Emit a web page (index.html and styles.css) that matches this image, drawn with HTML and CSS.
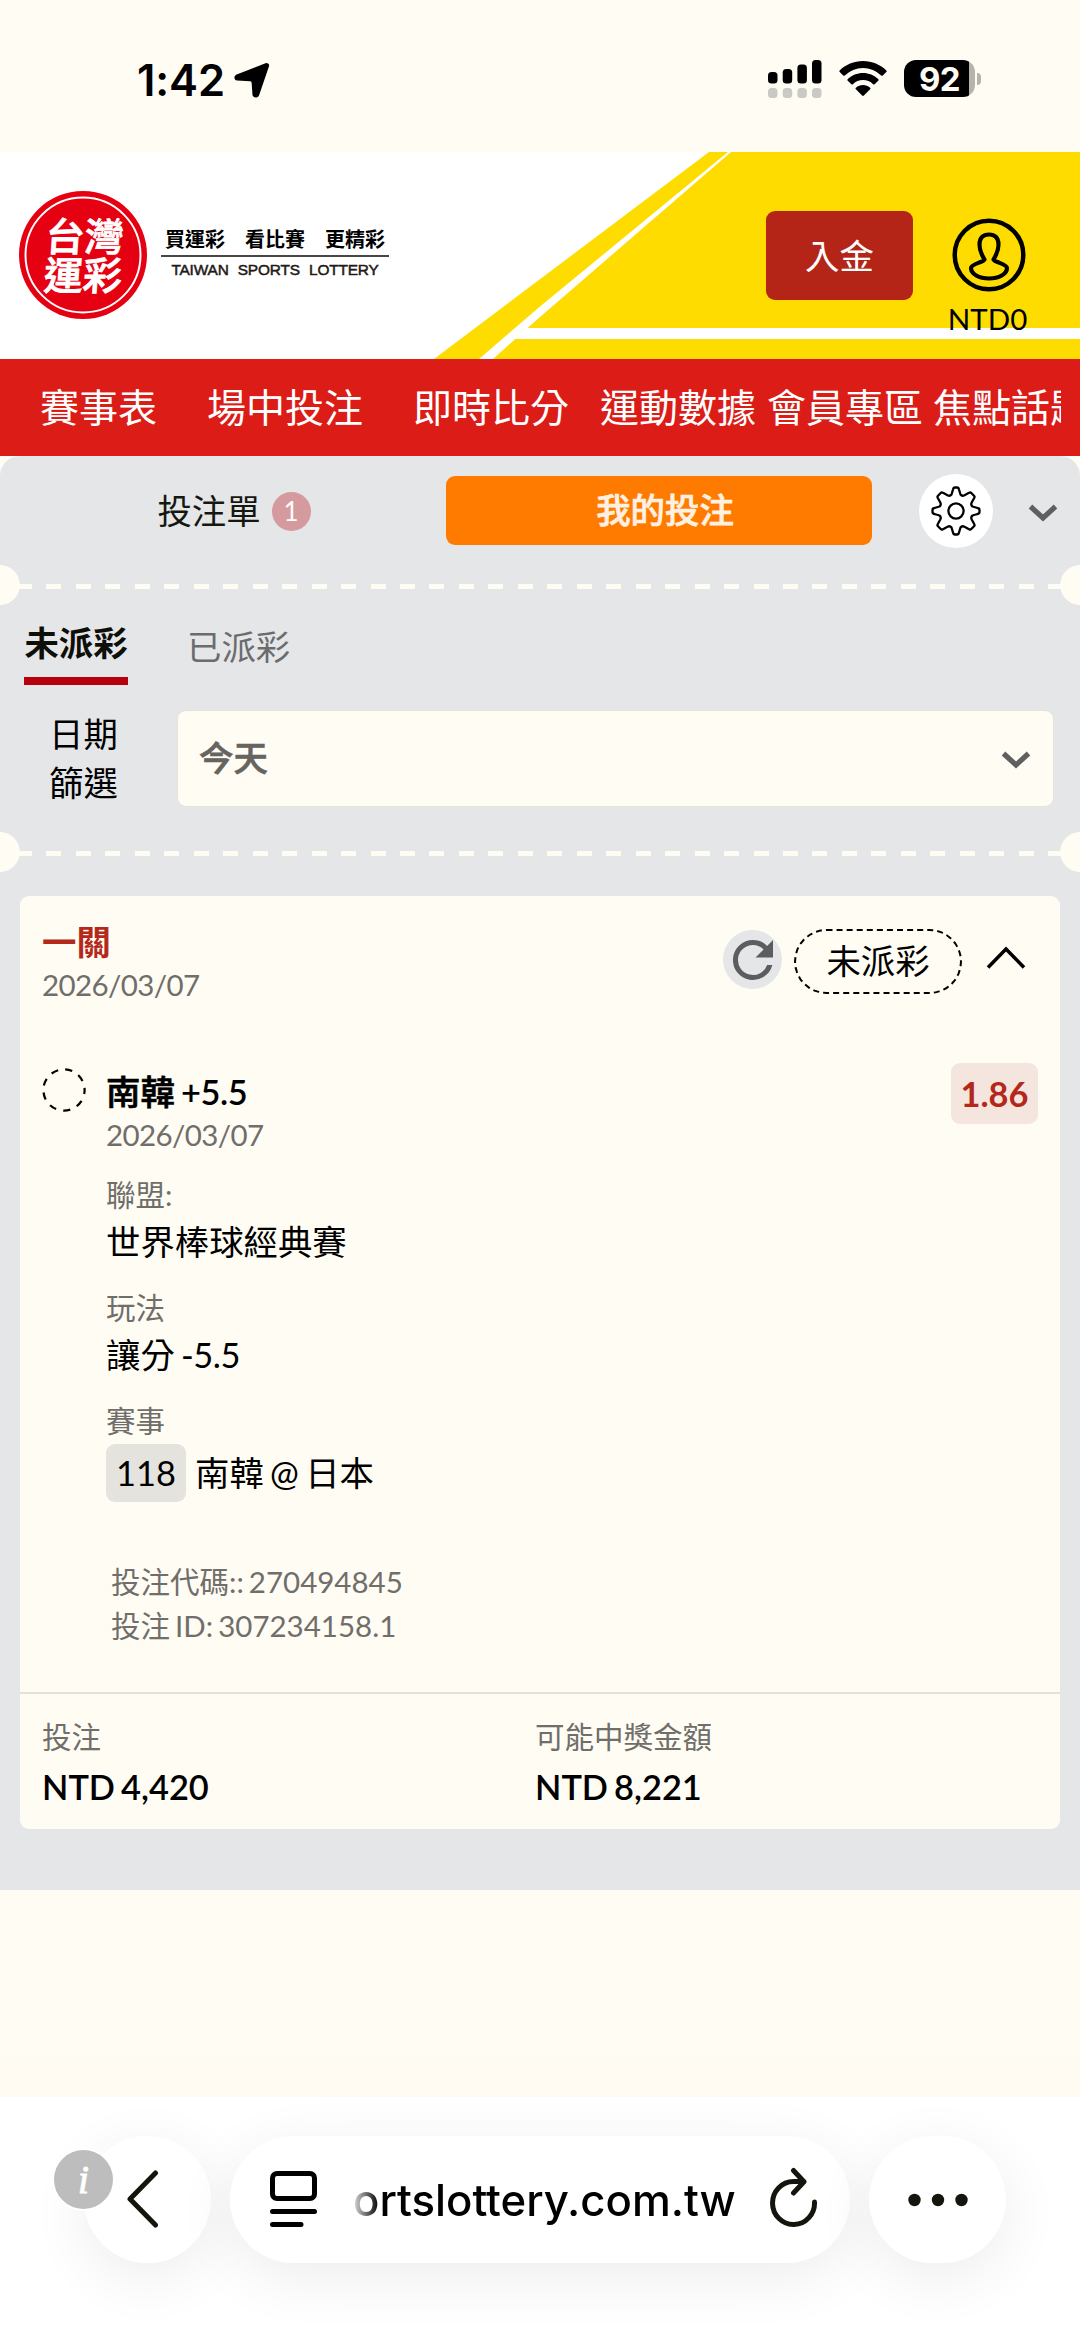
FILE: index.html
```html
<!DOCTYPE html>
<html lang="zh-Hant">
<head>
<meta charset="utf-8">
<title>台灣運彩</title>
<link rel="stylesheet" href="styles.css">
</head>
<body>
<div class="statusbar">
  <div class="clock">
    <span class="clock-time">1:42</span>
    <svg class="location" width="36" height="36" viewBox="0 0 36 36"><path d="M34 1.500C35 2 35.400 3 35 4.200L25 33.500C23.500 36.500 19 36 18.500 33L17.600 20.600Q17.500 19.400 16.300 19.300L3 18.600C0 18 -.4 14.500 2 12.700L31.500 1.300Q33 .8 34 1.500Z"/></svg>
  </div>
  <div class="indicators">
    <svg class="signal" width="54" height="40" viewBox="0 0 54 40">
      <g fill="#000"><rect x="0" y="12" width="9.500" height="11.500" rx="3.500"/><rect x="14.700" y="9" width="9.500" height="14.500" rx="3.500"/><rect x="29.400" y="4.500" width="9.500" height="19" rx="3.500"/><rect x="44" y="0" width="9.500" height="23.500" rx="3.500"/></g>
      <g fill="#cbc9c4"><rect x="0" y="28" width="9.500" height="10" rx="3.500"/><rect x="14.700" y="28" width="9.500" height="10" rx="3.500"/><rect x="29.400" y="28" width="9.500" height="10" rx="3.500"/><rect x="44" y="28" width="9.500" height="10" rx="3.500"/></g>
    </svg>
    <svg class="wifi" width="48" height="36" viewBox="0 0 48 36"><path d="M24 0C33 0 41.500 3.600 47.300 9.400Q48 10.200 47.300 11L43.800 14.500Q43 15.200 42.200 14.500A26 26 0 0 0 5.800 14.500Q5 15.200 4.200 14.500L.7 11Q0 10.200.7 9.400C6.500 3.600 15 0 24 0ZM24 12C29.800 12 35.200 14.300 39.200 18.100Q40 18.900 39.200 19.700L35.600 23.200Q34.900 23.900 34.100 23.200A14.500 14.500 0 0 0 13.900 23.200Q13.100 23.900 12.400 23.200L8.800 19.700Q8 18.900 8.800 18.100C12.800 14.300 18.200 12 24 12ZM24 24C26.700 24 29.200 25 31.100 26.700Q31.900 27.500 31.100 28.300L24.900 34.600Q24 35.500 23.100 34.600L16.900 28.300Q16.100 27.500 16.900 26.700C18.800 25 21.300 24 24 24Z"/></svg>
    <div class="battery"><span class="battery-level">92</span></div>
    <span class="battery-cap"></span>
  </div>
</div>

<header class="masthead">
  <svg class="logo" width="128" height="128" viewBox="0 0 128 128">
    <circle cx="64" cy="64" r="64" fill="#e50012"/>
    <circle cx="64" cy="64" r="57.500" fill="none" stroke="#fff" stroke-width="2"/>
    <g class="logo-text" transform="translate(64 0) skewX(-4)"><text x="-34" y="60">台灣</text><text x="-33" y="99">運彩</text></g>
  </svg>
  <div class="slogan">
    <div class="slogan-zh">買運彩　看比賽　更精彩</div>
    <div class="slogan-en">TAIWAN SPORTS LOTTERY</div>
  </div>
  <button class="deposit">入金</button>
  <div class="account">
    <svg width="74" height="74" viewBox="0 0 74 74" fill="none" stroke="#000" stroke-width="4.500" stroke-linecap="round" stroke-linejoin="round"><circle cx="37" cy="37" r="34.300"/><path d="M32.500 41.500C29.500 36 27.500 33.500 27.500 26.500C27.500 20 31 16.500 37 16.500S46.500 20 46.500 26.500C46.500 33.500 44.500 36 41.500 41.500C43 44.500 55 46 55 50C55 56 47 60.500 37 60.500S19 56 19 50C19 46 31 44.500 32.500 41.500Z" stroke-width="4.200"/></svg>
    <span>NTD0</span>
  </div>
</header>

<nav class="mainnav">
  <div class="mainnav-track"><a class="n1">賽事表</a><a class="n2">場中投注</a><a class="n3">即時比分</a><a class="n4">運動數據</a><a class="n5">會員專區</a><a>焦點話題</a></div>
</nav>

<main class="panel">
  <div class="sliptabs">
    <div class="sliptab">投注單<span class="count">1</span></div>
    <div class="sliptab active">我的投注</div>
    <div class="gear"><svg width="52" height="52" viewBox="-26 -26 52 52" fill="none" stroke="#000" stroke-width="2.300" stroke-linejoin="round"><circle r="7.600"/><path d="M-4.500 -16.500L-3 -21.500Q-2.600 -23.500 -1 -23.500H1Q2.600 -23.500 3 -21.500L4.500 -16.500Q6 -14.500 8.500 -15.700L13 -18.200Q14.300 -19 15.300 -18L18 -15.300Q19 -14.300 18.200 -13L15.700 -8.500Q14.500 -6 16.500 -4.500L21.500 -3Q23.500 -2.600 23.500 -1V1Q23.500 2.600 21.500 3L16.500 4.500Q14.500 6 15.700 8.500L18.200 13Q19 14.300 18 15.300L15.300 18Q14.300 19 13 18.200L8.500 15.700Q6 14.500 4.500 16.500L3 21.500Q2.600 23.500 1 23.500H-1Q-2.600 23.500 -3 21.500L-4.500 16.500Q-6 14.500 -8.500 15.700L-13 18.200Q-14.300 19 -15.300 18L-18 15.300Q-19 14.300 -18.200 13L-15.700 8.500Q-14.500 6 -16.500 4.500L-21.500 3Q-23.500 2.600 -23.500 1V-1Q-23.500 -2.600 -21.500 -3L-16.500 -4.500Q-14.500 -6 -15.700 -8.500L-18.200 -13Q-19 -14.300 -18 -15.300L-15.300 -18Q-14.300 -19 -13 -18.200L-8.500 -15.700Q-6 -14.500 -4.500 -16.500Z"/></svg></div>
    <svg class="chevron" width="30" height="18" viewBox="0 0 30 18"><path d="M2.500 2.500L15 14L27.500 2.500"/></svg>
  </div>

  <div class="perforation"></div>

  <div class="payouttabs">
    <div class="payouttab current">未派彩</div>
    <div class="payouttab">已派彩</div>
  </div>

  <div class="filter">
    <label>日期<br>篩選</label>
    <div class="select">今天<svg class="chevron" width="30" height="18" viewBox="0 0 30 18"><path d="M2.500 2.500L15 14L27.500 2.500"/></svg></div>
  </div>

  <div class="perforation"></div>

  <article class="card">
    <div class="card-head">
      <div class="card-title"><div class="kind">一關</div><div class="date">2026/03/07</div></div>
      <div class="reload"><svg width="60" height="60" viewBox="-6 -6 36 36"><path fill="#5c5d5f" d="M17.650 6.350A7.960 7.960 0 0 0 12 4a8 8 0 1 0 7.730 10h-2.080A6 6 0 1 1 12 6c1.660 0 3.140.69 4.220 1.780L13 11h7V4z" transform="translate(-6 -6) scale(1.500)"/></svg></div>
      <div class="state">未派彩</div>
      <svg class="fold" width="40" height="24" viewBox="0 0 40 24"><path d="M2 21.500L20 3L38 21.500"/></svg>
    </div>

    <div class="pick">
      <svg class="pending" width="46" height="46" viewBox="0 0 46 46"><circle cx="23" cy="23" r="20.600"/></svg>
      <div class="pick-body">
        <div class="pick-name">南韓 <b>+5.5</b></div>
        <div class="date">2026/03/07</div>
        <dl class="facts">
          <div><dt>聯盟:</dt><dd>世界棒球經典賽</dd></div>
          <div><dt>玩法</dt><dd>讓分 <span class="line">-5.5</span></dd></div>
          <div><dt>賽事</dt><dd class="match"><span class="match-no">118</span>南韓 @ 日本</dd></div>
        </dl>
        <div class="codes"><div>投注代碼:: 270494845</div><div>投注 ID: 307234158.1</div></div>
      </div>
      <div class="odds">1.86</div>
    </div>

    <div class="totals">
      <div><div class="label">投注</div><div class="amount">NTD 4,420</div></div>
      <div><div class="label">可能中獎金額</div><div class="amount">NTD 8,221</div></div>
    </div>
  </article>
</main>

<div class="spacer"></div>

<footer class="browserbar">
  <div class="pill back">
    <svg width="32" height="58" viewBox="0 0 32 58"><path d="M28.500 3L3 29L28.500 55"/></svg>
    <span class="info">i</span>
  </div>
  <div class="pill address">
    <svg class="reader" width="48" height="58" viewBox="0 0 48 58"><rect x="2.500" y="2.500" width="42" height="25" rx="4.500"/><path d="M2.500 40.500H44.500M2.500 53.500H31"/></svg>
    <span class="url">ortslottery.com.tw</span>
    <svg class="refresh" width="50" height="60" viewBox="0 0 50 60"><path d="M45.500 35A21 21.500 0 1 1 24.500 14.500H34M24.500 3.500L35 14.800L24.500 26"/></svg>
  </div>
  <div class="pill more"><svg width="62" height="14" viewBox="0 0 62 14"><circle cx="7.500" cy="7" r="6.200"/><circle cx="31" cy="7" r="6.200"/><circle cx="54.500" cy="7" r="6.200"/></svg></div>
</footer>
</body>
</html>
```
FILE: styles.css
```css
* { box-sizing: border-box; }

body {
  margin: 0;
  width: 1080px;
  height: 2347px;
  overflow: hidden;
  display: flex;
  flex-direction: column;
  background: #fffcf4;
  color: #000;
  font: 400 34.4px/43px Lato, "Noto Sans CJK TC", sans-serif;
  word-spacing: -2.5px;
}

svg { display: block; flex: none; }

/* device status bar */
.statusbar {
  height: 152px;
  display: flex;
  justify-content: space-between;
  padding: 60px 99px 0 137px;
  font-family: Inter, sans-serif;
}
.clock { display: flex; gap: 9px; height: 40px; align-items: center; }
.clock-time { font-size: 43.500px; font-weight: 600; line-height: 40px; letter-spacing: -.1px; }
.indicators { display: flex; height: 40px; }
.wifi { margin: 1px 17px 0 17px; }
.battery {
  width: 71px;
  height: 37px;
  border-radius: 12px;
  background: linear-gradient(90deg, #000 65px, #b5b3ae 65px);
  color: #fffcf4;
  font-size: 33px;
  font-weight: 700;
  line-height: 38px;
  text-align: center;
  letter-spacing: -.5px;
}
.battery-cap { width: 4px; height: 12px; margin: 13px 0 0 2px; border-radius: 0 4px 4px 0; background: #b5b3ae; }

/* site header */
.masthead {
  height: 207px;
  display: flex;
  align-items: flex-start;
  padding: 39px 0 0 19px;
  background: #fff;
  position: relative;
}
.masthead::before,
.masthead::after { content: ""; position: absolute; inset: 0; }
.masthead::before {
  background: #ffdc00;
  clip-path: polygon(709px 0, 728px 0, 540px 154.500px, 479px 207px, 434px 207px);
}
.masthead::after {
  background: linear-gradient(#ffdc00 176px, #fff 176px 187px, #ffdc00 187px);
  clip-path: polygon(731px 0, 1080px 0, 1080px 207px, 493px 207px, 540px 165px);
}
.masthead > * { z-index: 1; }
.logo-text { fill: #fff; stroke: #fff; stroke-width: .9px; font-family: "Noto Sans CJK TC", sans-serif; font-weight: 500; font-size: 39px; }
.slogan { width: 228px; margin: 31px 0 0 14px; display: flex; flex-direction: column; }
.slogan-zh {
  font: 700 20px/33px "Noto Sans CJK TC", sans-serif;
  border-bottom: 2px solid #4a4645;
  padding-left: 4px;
  white-space: nowrap;
}
.slogan-en {
  font: 400 15.400px/26px "Liberation Sans", sans-serif;
  -webkit-text-stroke: .5px #231815;
  color: #231815;
  text-align: center;
  letter-spacing: -.15px;
  word-spacing: 5px;
  white-space: nowrap;
}
.deposit {
  width: 147px;
  height: 89px;
  margin: 20px 0 0 377px;
  border: 0;
  border-radius: 9px;
  background: #b42518;
  color: #fff;
  font: inherit;
}
.account {
  width: 90px;
  margin: 27px 0 0 31px;
  display: flex;
  flex-direction: column;
  align-items: center;
  font-size: 29.500px;
  line-height: 36px;
}
.account span { margin: 9px 3px 0 0; }

/* main navigation */
.mainnav { height: 97px; background: #db1c17; padding: 0 19px 0 0; }
.mainnav-track {
  display: flex;
  height: 97px;
  padding-left: 40px;
  overflow: hidden;
  white-space: nowrap;
  color: #fff;
  font-size: 39px;
  line-height: 97px;
}
.mainnav a { flex: none; }
.n1 { margin-right: 50px; }
.n2 { margin-right: 50px; }
.n3 { margin-right: 31px; }
.n4 { margin-right: 11px; }
.n5 { margin-right: 10px; }

/* bet slip panel */
.panel {
  height: 1434px;
  border-radius: 20px 20px 0 0;
  background: #e4e6e8;
}
.sliptabs { height: 109px; display: flex; padding: 17px 22px 0 22px; align-items: flex-start; }
.sliptab {
  flex: none;
  width: 424px;
  height: 74px;
  display: flex;
  align-items: center;
  justify-content: center;
  color: #171712;
}
.count {
  width: 39px;
  height: 39px;
  margin: 2px 0 0 11px;
  border-radius: 50%;
  background: #d49a9e;
  color: #fff;
  font-size: 26px;
  line-height: 39px;
  text-align: center;
}
.sliptab.active {
  width: 426px;
  height: 69px;
  margin-top: 3px;
  padding: 0 0 3px 12px;
  border-radius: 9px;
  background: #ff7b00;
  color: #fff1e2;
  font-weight: 500;
  -webkit-text-stroke: .7px;
}
.gear {
  width: 74px;
  height: 74px;
  margin: 1px 35px 0 47px;
  border-radius: 50%;
  background: #fff;
  display: flex;
  align-items: center;
  justify-content: center;
}
.chevron path { fill: none; stroke: #5f5f5e; stroke-width: 5.200; }
.sliptabs .chevron { margin-top: 31px; }

.perforation {
  height: 40px;
  background:
    radial-gradient(circle at 0 20px, #fffcf4 19.500px, transparent 20.200px),
    radial-gradient(circle at 100% 20px, #fffcf4 19.500px, transparent 20.200px),
    repeating-linear-gradient(90deg, #fffcf4 0 15px, transparent 15px 29.460px) 17px 19px / 1100px 5px no-repeat;
}

.payouttabs { display: flex; padding: 21px 0 0 24px; height: 90px; gap: 59px; }
.payouttab { line-height: 43px; height: 60px; color: #6b6c6d; margin-top: -1px; }
.current { width: 104px; height: 59px; margin-top: 0; border-bottom: 8px solid #b8000f; color: #0f0f0a; font-weight: 700; line-height: 34px; text-align: center; }

.filter { display: flex; height: 137px; padding: 15px 26px 0 49px; }
.filter label { width: 128px; line-height: 49px; margin-top: -1px; }
.select {
  flex: 1;
  height: 97px;
  display: flex;
  align-items: center;
  justify-content: space-between;
  padding: 0 22px 2px 21px;
  border: 1px solid #e6e3da;
  border-radius: 9px;
  background: #fffcf4;
  color: #66645f;
  font-weight: 500;
  -webkit-text-stroke: .7px;
}
.select .chevron { margin-top: 4px; }

/* bet card */
.card {
  width: 1040px;
  height: 933px;
  margin: 24px 20px 0;
  padding-top: 25px;
  border-radius: 9px;
  background: #fffcf4;
}
.card-head { height: 142px; display: flex; align-items: flex-start; padding: 0 34px 0 22px; }
.card-title { flex: 1; }
.kind { color: #b32a1b; font-weight: 700; line-height: 42px; }
.date { color: #706e6a; font-size: 29.500px; letter-spacing: -.6px; line-height: 44px; }
.reload { width: 59px; height: 59px; margin-top: 9px; border-radius: 50%; background: #e4e6e8; display: flex; align-items: center; justify-content: center; }
.state {
  width: 168px;
  height: 65px;
  margin: 8px 24px 0 12px;
  border: 2px dashed #000;
  border-radius: 33px;
  line-height: 60px;
  text-align: center;
}
.fold { margin-top: 25px; }
.fold path { fill: none; stroke: #000; stroke-width: 3.500; }

.pick { height: 629px; display: flex; align-items: flex-start; padding: 0 22px; }
.pending { margin: 4px 19px 0 -1px; }
.pending circle { fill: none; stroke: #000; stroke-width: 2.200; stroke-dasharray: 7.190 7.190; stroke-dashoffset: 3; }
.pick-body { flex: 1; padding-top: 7px; }
.pick-name { font-weight: 500; -webkit-text-stroke: .7px; }
.pick-name b { font-weight: 600; letter-spacing: -.4px; -webkit-text-stroke: 0; }
.facts { margin: 16px 0 0; display: flex; flex-direction: column; gap: 16px; }
.facts dt { color: #706e6a; font-size: 29.500px; line-height: 44px; }
.facts dd { margin: 0; padding-bottom: 3px; line-height: 50px; }
.line { letter-spacing: -.5px; }
.facts .match { display: flex; align-items: center; line-height: 58px; margin-top: 1px; padding: 0; }
.match-no { margin-right: 9px; width: 80px; border-radius: 9px; background: #e4e3dd; text-align: center; }
.codes { margin: 58px 0 0 5px; color: #706e6a; font-size: 29.500px; line-height: 44px; }
.odds { width: 87px; height: 61px; border-radius: 9px; background: #f5e5df; color: #b3281a; font-weight: 700; line-height: 61px; text-align: center; }

.totals { height: 137px; display: grid; grid-template-columns: 493px 1fr; padding: 21px 22px 0; border-top: 2px solid #e4e1d9; }
.label { color: #706e6a; font-size: 29.500px; line-height: 44px; }
.amount { line-height: 55px; font-weight: 600; }

.spacer { flex: 1; background: linear-gradient(#fffcf4 80%, #fffaf2); }

/* browser toolbar */
.browserbar { height: 250px; display: flex; align-items: flex-start; gap: 19px; padding: 39px 0 0 84px; background: #fff; overflow: hidden; }
.pill { height: 127px; border-radius: 64px; background: #fff; display: flex; align-items: center; justify-content: center; box-shadow: 0 14px 60px rgba(0, 0, 0, .075); position: relative; }
.back { width: 127px; padding: 0 10px 2px 0; }
.back path { fill: none; stroke: #15150e; stroke-width: 5; stroke-linecap: round; stroke-linejoin: round; }
.info {
  position: absolute;
  left: -32px;
  top: 12px;
  width: 63px;
  height: 63px;
  border: 2px solid #fff;
  border-radius: 50%;
  background: #bdbdbd;
  color: #fff;
  font: italic 400 41px/58px "Liberation Serif", serif;
  -webkit-text-stroke: .8px;
  text-align: center;
}
.address { width: 620px; justify-content: flex-start; padding-left: 40px; }
.reader { fill: none; stroke: #000; stroke-width: 5; stroke-linecap: round; }
.url {
  width: 384px;
  margin: 2px 32px 0 35px;
  font: 500 43.700px/60px Inter, sans-serif;
  white-space: nowrap;
  background: linear-gradient(90deg, #ccc 2px, #000 26px);
  background-clip: text;
  -webkit-background-clip: text;
  color: transparent;
}
.refresh { margin-top: -5px; fill: none; stroke: #15150e; stroke-width: 5; stroke-linecap: round; stroke-linejoin: round; }
.more { width: 137px; }
.more svg { fill: #15150e; }
```
